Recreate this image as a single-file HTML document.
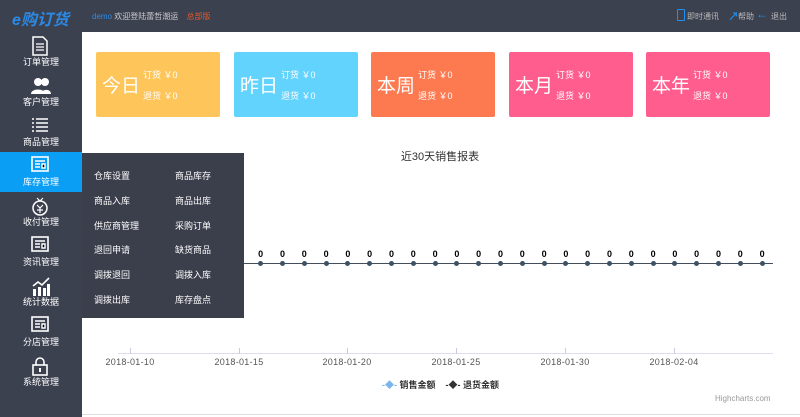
<!DOCTYPE html>
<html><head><meta charset="utf-8"><style>
*{margin:0;padding:0;box-sizing:border-box}
body{width:800px;height:417px;overflow:hidden;background:#fff;font-family:"Liberation Sans","Noto Sans CJK SC",sans-serif;position:relative}
.a{position:absolute}
.top{left:0;top:0;width:800px;height:32px;background:#3c4150}
.side{left:0;top:32px;width:82px;height:385px;background:#3c4150}
.it{position:absolute;left:0;width:82px;height:40px;color:#fff;font-size:9px;text-align:center}
.it span{position:absolute;left:0;right:0;bottom:4px}
.it svg{position:absolute;left:31px;top:4px}
.card{top:52px;width:124px;height:65px;border-radius:2px;color:#fff}
.card b{position:absolute;left:6px;top:19px;font-size:19px;font-weight:normal}
.card i{position:absolute;left:47px;font-style:normal;font-size:9px}
.dd{left:82px;top:153px;width:162px;height:165px;background:#3b3f4c}
.dd div{position:absolute;color:#fff;font-size:9px}
.pt{position:absolute;width:5px;height:5px;border-radius:50%;background:#3d5266;top:261px}
.z{position:absolute;font-size:9px;font-weight:bold;color:#000;top:249px;width:10px;text-align:center}
.dl{position:absolute;top:357px;font-size:9px;color:#555;width:60px;text-align:center;letter-spacing:.3px}
.tk{position:absolute;top:348px;width:1px;height:6px;background:#ccd}
</style></head><body>
<div class="a top"></div>
<div class="a" style="left:12px;top:6px;color:#2b8ae6;font-size:16px;font-weight:bold;font-style:italic">e购订货</div>
<div class="a" style="left:92px;top:11px;font-size:8px;color:#ccc"><span style="color:#2b8ae6">demo</span> 欢迎登陆蕾哲潮运 <span style="color:#e8572a;margin-left:6px">总部版</span></div>
<div class="a" style="left:677px;top:9px;width:8px;height:12px;border:1.5px solid #1e8fef;border-radius:1px"></div>
<div class="a" style="left:687px;top:11px;font-size:8px;color:#bbb">即时通讯</div>
<div class="a" style="left:728px;top:8px;color:#1e8fef;font-size:11px;font-weight:bold">↗</div>
<div class="a" style="left:738px;top:11px;font-size:8px;color:#bbb">帮助</div>
<div class="a" style="left:756px;top:7px;color:#1e8fef;font-size:12px;font-weight:bold">←</div>
<div class="a" style="left:771px;top:11px;font-size:8px;color:#bbb">退出</div>

<div class="a side"></div>
<div class="it" style="top:32px"><svg width="18" height="20"><path d="M2 1h10l4 4v14H2z" fill="none" stroke="#fff" stroke-width="1.5"/><path d="M5 8h8M5 11h8M5 14h8" stroke="#fff" stroke-width="1.3"/></svg><span>订单管理</span></div>
<div class="it" style="top:72px"><svg width="20" height="20"><circle cx="7" cy="6" r="4" fill="#fff"/><circle cx="14" cy="6" r="4" fill="#fff"/><path d="M0 18c0-6 14-6 14 0zM10 18c0-5 10-6 10 0z" fill="#fff"/></svg><span>客户管理</span></div>
<div class="it" style="top:112px"><svg width="18" height="16"><path d="M1 3h2M5 3h12M1 7h2M5 7h12M1 11h2M5 11h12M1 15h2M5 15h12" stroke="#fff" stroke-width="1.6"/></svg><span>商品管理</span></div>
<div class="it" style="top:152px;background:#0a9ef5"><svg width="18" height="16"><rect x="1" y="1" width="16" height="14" fill="none" stroke="#fff" stroke-width="1.6"/><path d="M4 5h10M4 8h5M11 8h3v4h-3zM4 11h5" stroke="#fff" stroke-width="1.4"/></svg><span>库存管理</span></div>
<div class="it" style="top:192px"><svg width="18" height="20"><circle cx="9" cy="12" r="7" fill="none" stroke="#fff" stroke-width="1.5"/><path d="M6 2l3 3 3-3M6 9l3 3 3-3M9 12v5M6 14h6" stroke="#fff" stroke-width="1.2" fill="none"/></svg><span>收付管理</span></div>
<div class="it" style="top:232px"><svg width="18" height="16"><rect x="1" y="1" width="16" height="14" fill="none" stroke="#fff" stroke-width="1.6"/><path d="M4 5h10M4 8h5M11 8h3v4h-3zM4 11h5" stroke="#fff" stroke-width="1.4"/></svg><span>资讯管理</span></div>
<div class="it" style="top:272px"><svg width="20" height="20"><path d="M2 10l5-4 4 3 7-7" stroke="#fff" stroke-width="1.6" fill="none"/><path d="M2 13h3v7H2zM7 11h3v9H7zM12 12h3v8h-3zM16 8h3v12h-3z" fill="#fff"/></svg><span>统计数据</span></div>
<div class="it" style="top:312px"><svg width="18" height="16"><rect x="1" y="1" width="16" height="14" fill="none" stroke="#fff" stroke-width="1.6"/><path d="M4 5h10M4 8h5M11 8h3v4h-3zM4 11h5" stroke="#fff" stroke-width="1.4"/></svg><span>分店管理</span></div>
<div class="it" style="top:352px"><svg width="18" height="20"><path d="M5 9V6a4 4 0 0 1 8 0v3" stroke="#fff" stroke-width="1.6" fill="none"/><rect x="2" y="9" width="14" height="10" fill="none" stroke="#fff" stroke-width="1.6"/><rect x="8" y="12" width="2" height="4" fill="#fff"/></svg><span>系统管理</span></div>

<div class="a card" style="left:96px;background:#fec55a"><b>今日</b><i style="top:16px">订货 ￥0</i><i style="top:37px">退货 ￥0</i></div>
<div class="a card" style="left:234px;background:#62d3fd"><b>昨日</b><i style="top:16px">订货 ￥0</i><i style="top:37px">退货 ￥0</i></div>
<div class="a card" style="left:371px;background:#fd7a51"><b>本周</b><i style="top:16px">订货 ￥0</i><i style="top:37px">退货 ￥0</i></div>
<div class="a card" style="left:509px;background:#fe5d8d"><b>本月</b><i style="top:16px">订货 ￥0</i><i style="top:37px">退货 ￥0</i></div>
<div class="a card" style="left:646px;background:#fe5d8d"><b>本年</b><i style="top:16px">订货 ￥0</i><i style="top:37px">退货 ￥0</i></div>

<div class="a" style="left:340px;top:148px;width:200px;text-align:center;font-size:11px;color:#333">近30天销售报表</div>
<div class="a" style="left:82px;top:263px;width:691px;height:1px;background:#444e5a"></div>
<div id="pts"></div>
<div class="a" style="left:118px;top:353px;width:655px;height:1px;background:#dde"></div>
<div class="tk" style="left:130px"></div><div class="tk" style="left:239px"></div><div class="tk" style="left:347px"></div><div class="tk" style="left:456px"></div><div class="tk" style="left:565px"></div><div class="tk" style="left:674px"></div>
<div class="dl" style="left:100px">2018-01-10</div>
<div class="dl" style="left:209px">2018-01-15</div>
<div class="dl" style="left:317px">2018-01-20</div>
<div class="dl" style="left:426px">2018-01-25</div>
<div class="dl" style="left:535px">2018-01-30</div>
<div class="dl" style="left:644px">2018-02-04</div>
<div class="a" style="left:382px;top:378px;font-size:9px;font-weight:bold;color:#333"><span style="color:#7cb5ec">-◆-</span> 销售金额 &nbsp;&nbsp; <span style="color:#333">-◆-</span> 退货金额</div>
<div class="a" style="left:715px;top:394px;font-size:8px;color:#999">Highcharts.com</div>
<div class="a" style="left:82px;top:414px;width:718px;height:1px;background:#ddd"></div>

<div class="a dd">
<div style="left:12px;top:16px">仓库设置</div><div style="left:93px;top:16px">商品库存</div>
<div style="left:12px;top:41px">商品入库</div><div style="left:93px;top:41px">商品出库</div>
<div style="left:12px;top:66px">供应商管理</div><div style="left:93px;top:66px">采购订单</div>
<div style="left:12px;top:90px">退回申请</div><div style="left:93px;top:90px">缺货商品</div>
<div style="left:12px;top:115px">调拨退回</div><div style="left:93px;top:115px">调拨入库</div>
<div style="left:12px;top:140px">调拨出库</div><div style="left:93px;top:140px">库存盘点</div>
</div>
<script>
var h='';for(var i=0;i<24;i++){var x=260.7+21.8*i;h+='<div class="pt" style="left:'+(x-2.5)+'px"></div><div class="z" style="left:'+(x-5)+'px">0</div>';}
document.getElementById('pts').innerHTML=h;
</script>
</body></html>
